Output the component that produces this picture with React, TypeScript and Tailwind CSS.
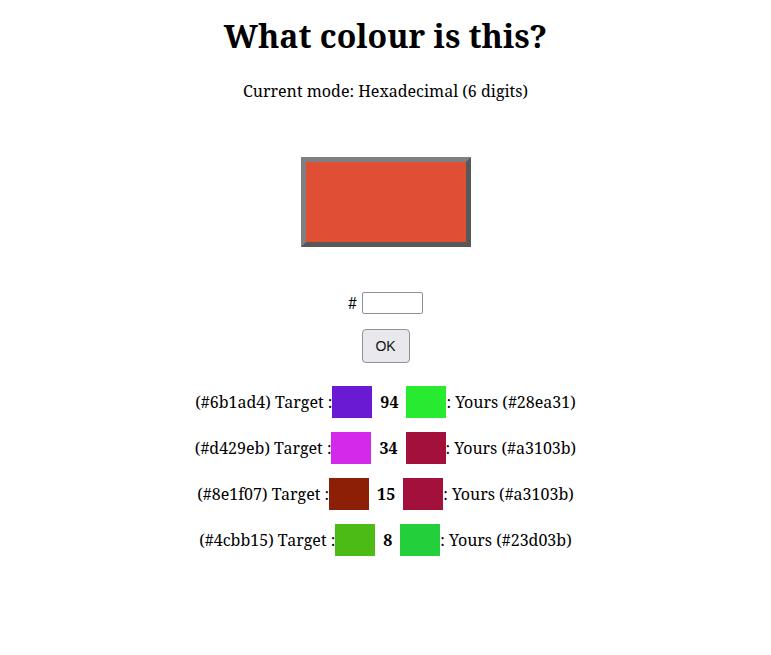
import { useState } from 'react';

interface Round {
    target: string;
    guess: string;
    score: number;
}

const rounds: Round[] = [
    { target: '6b1ad4', guess: '28ea31', score: 94 },
    { target: 'd429eb', guess: 'a3103b', score: 34 },
    { target: '8e1f07', guess: 'a3103b', score: 15 },
    { target: '4cbb15', guess: '23d03b', score: 8 },
];

function ResultRow({ target, guess, score }: Round) {
    return (
        <div className="flex items-center justify-center h-[32px]">
            <span>(#{target}) Target :</span>
            <span className="inline-block w-[40px] h-[32px]" style={{ backgroundColor: `#${target}` }} />
            <span className="font-bold px-[8px]">{score}</span>
            <span className="inline-block w-[40px] h-[32px]" style={{ backgroundColor: `#${guess}` }} />
            <span>: Yours (#{guess})</span>
        </div>
    );
}

export default function App() {
    const [value, setValue] = useState('');

    return (
        <div className="min-h-[655px] bg-white text-black font-['Noto_Serif','DejaVu_Serif',serif] text-[16px] text-center">
            <h1 className="text-[32px] font-bold pt-[16px] leading-[40px]">What colour is this?</h1>
            <p className="mt-[25px] leading-[20px]">Current mode: Hexadecimal (6 digits)</p>

            {/* Colour to guess */}
            <div className="flex justify-center mt-[56px]">
                <div className="w-[170px] h-[90px] bg-[#e04f35] border-[5px] border-t-[#808080] border-l-[#808080] border-b-[#585858] border-r-[#585858]" />
            </div>

            {/* Guess input */}
            <div className="flex items-center justify-center mt-[44px] gap-[5px]">
                <span>#</span>
                <input
                    value={value}
                    onChange={e => setValue(e.target.value)}
                    className="w-[61px] h-[22px] border border-[#8f8f9d] rounded-[2px] px-1 text-[13px] font-['Liberation_Sans',sans-serif]"
                />
            </div>
            <div className="flex justify-center mt-[14px]">
                <button className="w-[48px] h-[34px] bg-[#e9e9ed] border border-[#8f8f9d] rounded-[4px] text-[14px] text-[#111] font-['Liberation_Sans',sans-serif]">
                    OK
                </button>
            </div>

            {/* Previous rounds */}
            <div className="mt-[23px] flex flex-col gap-[14px]">
                {rounds.map(r => (
                    <ResultRow key={r.target} {...r} />
                ))}
            </div>
        </div>
    );
}
